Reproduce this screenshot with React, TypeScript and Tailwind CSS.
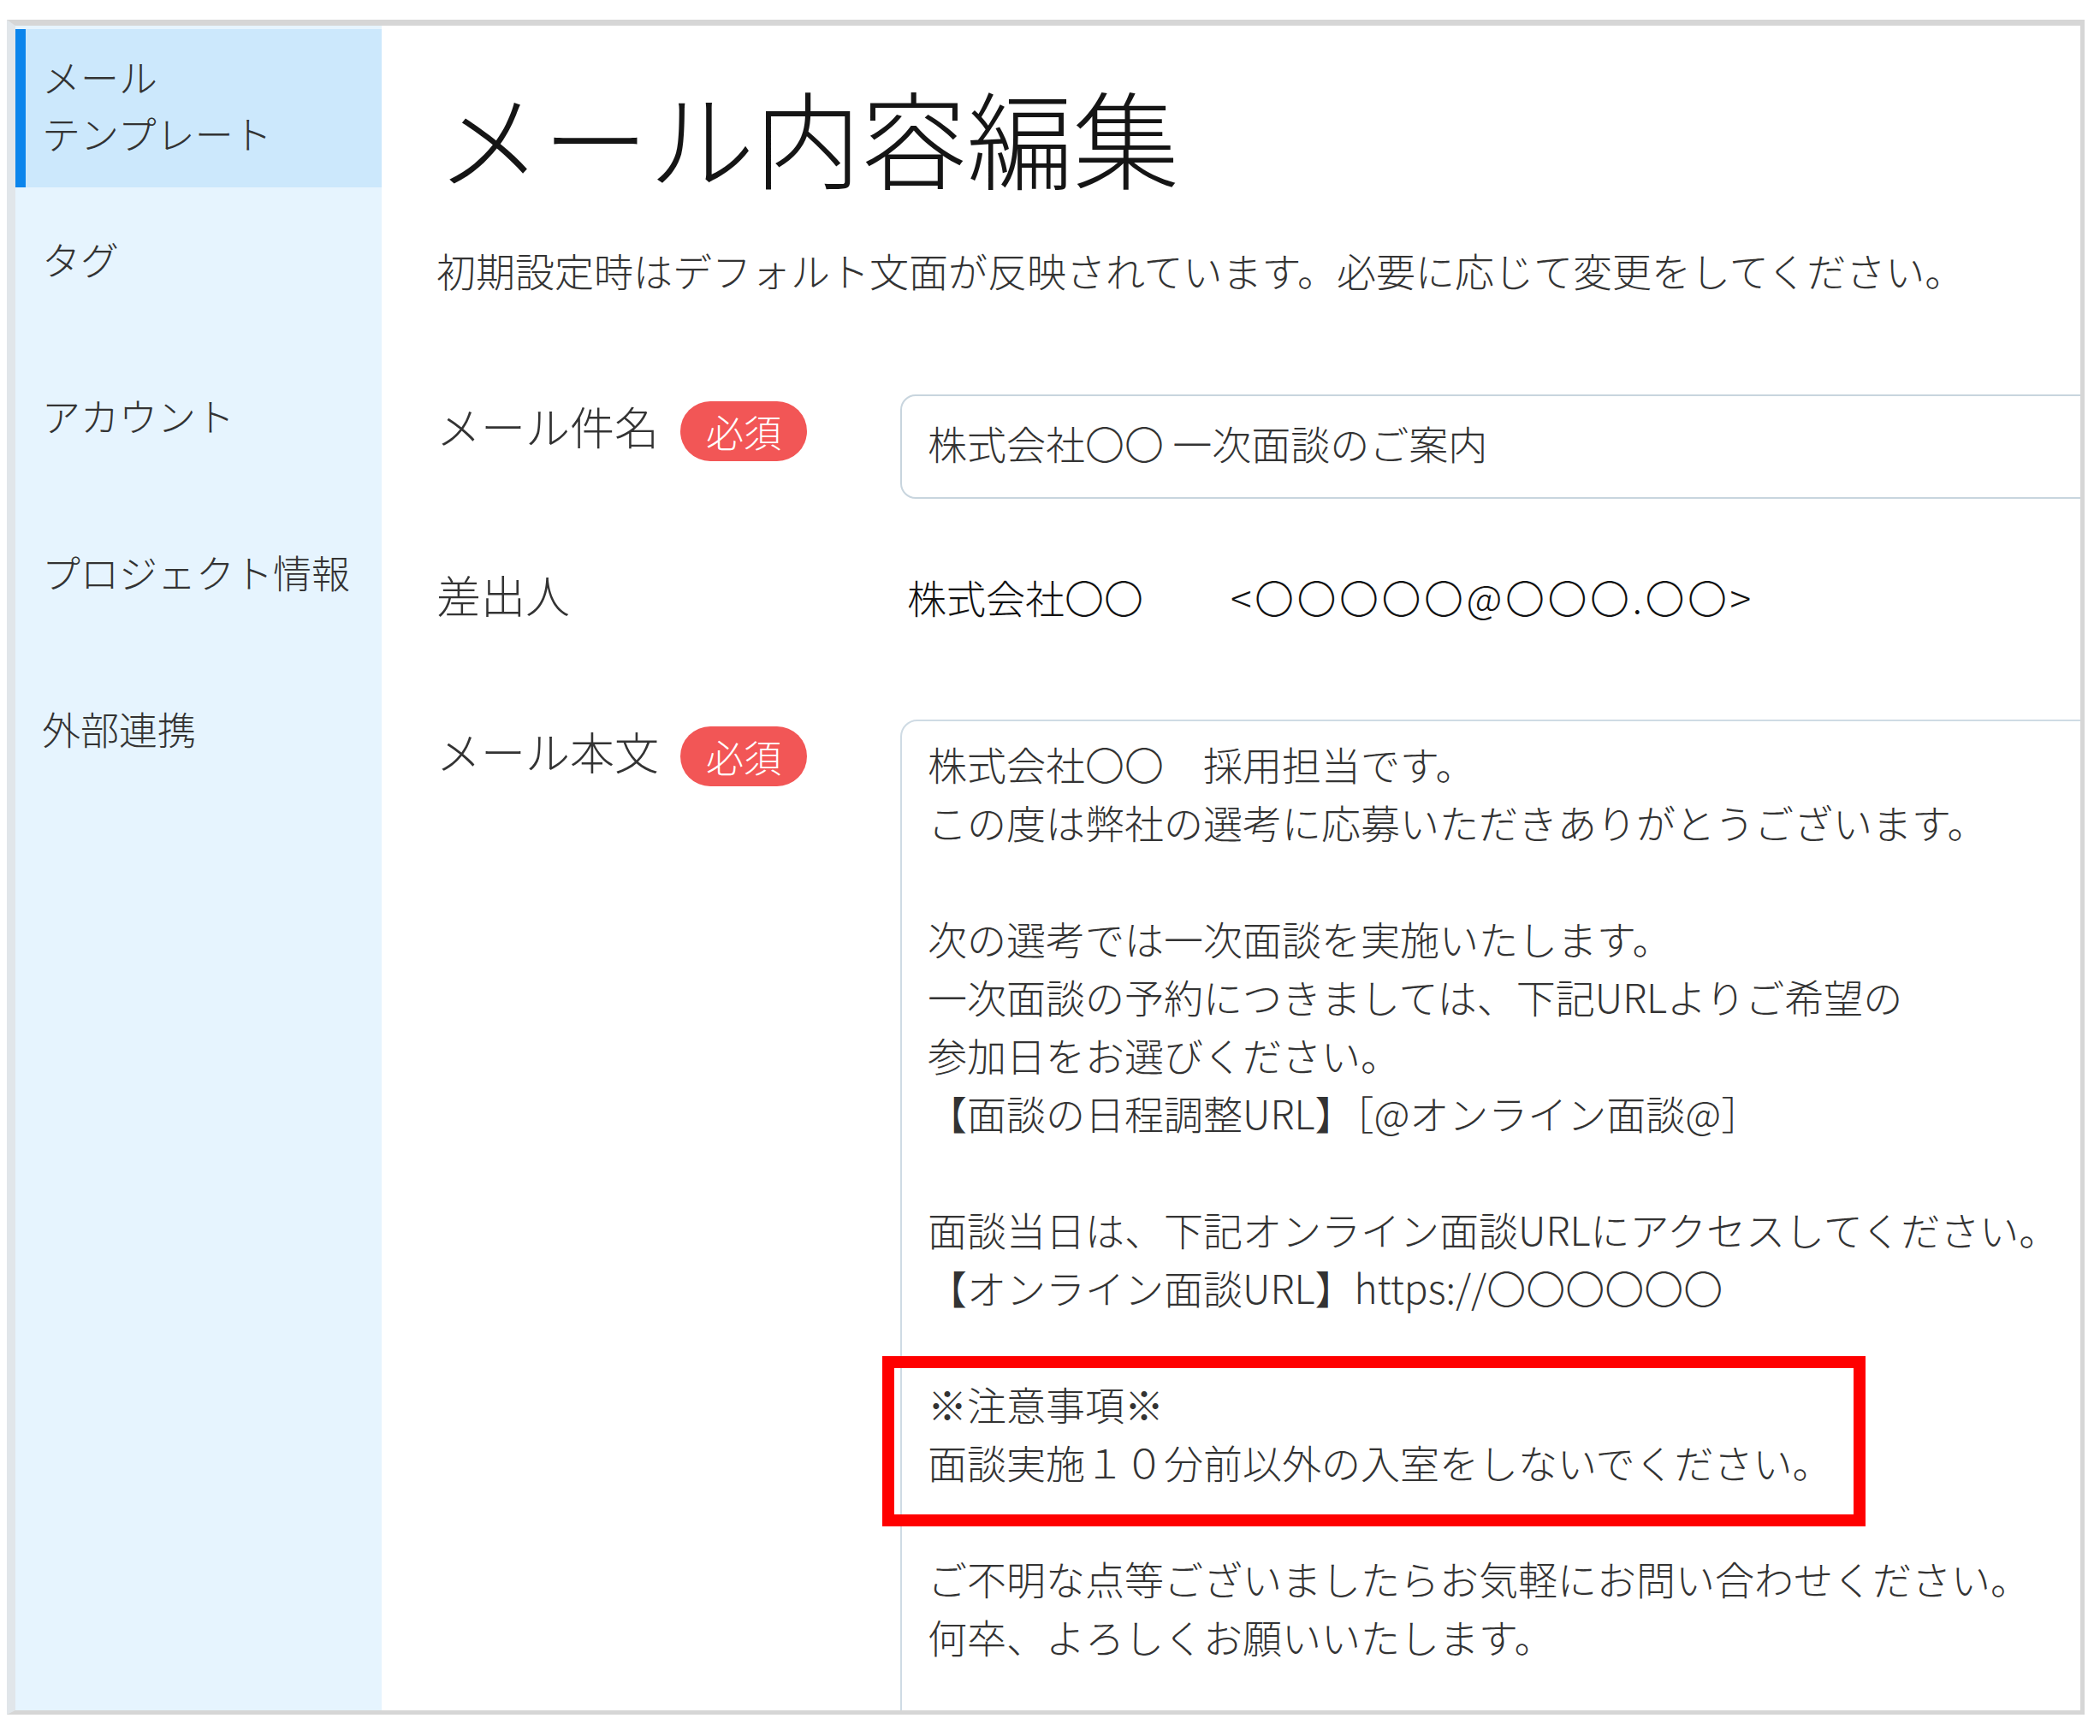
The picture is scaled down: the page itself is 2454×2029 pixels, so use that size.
import React from 'react';

const navItems = ['タグ', 'アカウント', 'プロジェクト情報', '外部連携'];

const bodyLines = [
  '株式会社〇〇　採用担当です。',
  'この度は弊社の選考に応募いただきありがとうございます。',
  '',
  '次の選考では一次面談を実施いたします。',
  '一次面談の予約につきましては、下記URLよりご希望の',
  '参加日をお選びください。',
  '【面談の日程調整URL】［@オンライン面談@］',
  '',
  '面談当日は、下記オンライン面談URLにアクセスしてください。',
  '【オンライン面談URL】https://〇〇〇〇〇〇',
  '',
  '※注意事項※',
  '面談実施１０分前以外の入室をしないでください。',
  '',
  'ご不明な点等ございましたらお気軽にお問い合わせください。',
  '何卒、よろしくお願いいたします。',
];

function Required() {
  return (
    <span className="h-[70px] px-[30px] rounded-full bg-[#f25656] text-white text-[44px] leading-[70px] shrink-0">
      必須
    </span>
  );
}

export default function App() {
  return (
    <div className="relative w-[2454px] h-[2029px] bg-white overflow-hidden font-['Noto_Sans_CJK_JP',sans-serif] font-light text-[#333]">
      {/* Frame */}
      <div className="ml-[8px] mt-[23px] w-[2428px] h-[1981px] flex overflow-hidden border-t-[7px] border-r-[5px] border-b-[5px] border-l-[10px] border-t-[#d6d6d6] border-r-[#d6d6d6] border-b-[#d6d6d6] border-l-[#e1e6ea]">
        {/* Sidebar */}
        <aside className="w-[428px] shrink-0 bg-[#e6f4fe] flex flex-col pt-[4px]">
          <div className="h-[185px] bg-[#cce8fc] border-l-[12px] border-[#0b85ec] pl-[19px] flex items-center text-[45px] leading-[66px] pb-[8px]">
            <div>
              メール
              <br />
              テンプレート
            </div>
          </div>
          {navItems.map((item) => (
            <div key={item} className="h-[183px] pl-[31px] flex items-center pb-[16px] text-[45px] leading-[66px]">
              {item}
            </div>
          ))}
        </aside>

        {/* Main */}
        <main className="flex-1 min-w-0 overflow-hidden pl-[64px]">
          <h1 className="mt-[66px] text-[124px] leading-[124px] text-[#151515] whitespace-nowrap">メール内容編集</h1>
          <p className="mt-[72px] text-[46px] leading-[46px] whitespace-nowrap">
            初期設定時はデフォルト文面が反映されています。必要に応じて変更をしてください。
          </p>

          {/* Subject */}
          <div className="mt-[123px] flex">
            <div className="w-[542px] shrink-0 flex items-center gap-[25px] pt-[8px] h-[78px]">
              <span className="text-[52px] leading-[70px] whitespace-nowrap pb-[12px]">メール件名</span>
              <Required />
            </div>
            <div className="w-[1450px] shrink-0 h-[122px] border-2 border-[#c8d5de] rounded-[18px] pl-[30px] pb-[10px] flex items-center text-[46px] whitespace-nowrap">
              株式会社〇〇 一次面談のご案内
            </div>
          </div>

          {/* Sender */}
          <div className="mt-[79px] flex h-[70px] items-center">
            <div className="w-[542px] shrink-0 text-[52px] leading-[70px] pb-[4px]">差出人</div>
            <div className="pl-[8px] text-[46px] text-[#111] whitespace-nowrap">
              株式会社〇〇
              <span className="ml-[102px] tracking-[3.5px]">&lt;〇〇〇〇〇@〇〇〇.〇〇&gt;</span>
            </div>
          </div>

          {/* Body */}
          <div className="mt-[109px] flex">
            <div className="w-[542px] shrink-0 flex items-center gap-[25px] pt-[8px] h-[78px]">
              <span className="text-[52px] leading-[70px] whitespace-nowrap pb-[12px]">メール本文</span>
              <Required />
            </div>
            <div className="w-[1450px] shrink-0 h-[1300px] border-2 border-[#cfdbe4] rounded-[20px] pl-[30px] pt-[15px] text-[46px] whitespace-nowrap">
              {bodyLines.map((line, i) => (
                <div key={i} className="h-[68px] leading-[68px]">
                  {line || '\u00a0'}
                </div>
              ))}
            </div>
          </div>
        </main>
      </div>

      {/* Annotation box */}
      <div className="absolute left-[1031px] top-[1585px] w-[1149px] h-[199px] border-[14px] border-[#ff0000]" />
    </div>
  );
}
